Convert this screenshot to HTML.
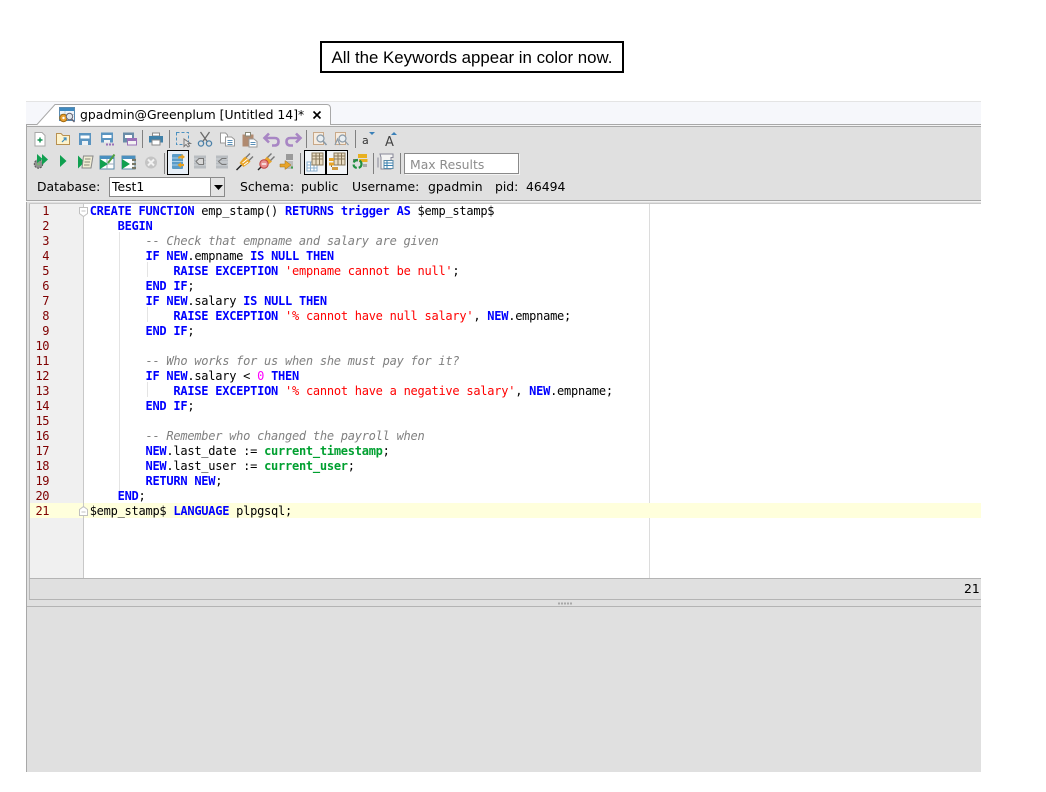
<!DOCTYPE html>
<html><head><meta charset="utf-8"><style>
html,body{margin:0;padding:0;background:#fff;width:1046px;height:792px;overflow:hidden}
.a{position:absolute}
#cap{left:320px;top:41px;width:300px;height:28px;border:2px solid #000;font:16.85px/30px "Liberation Sans",sans-serif;text-align:center;color:#000;background:#fff;white-space:nowrap}
.ui{font-family:"DejaVu Sans",sans-serif;font-size:12.4px;color:#000;white-space:pre;line-height:15px}
.n{position:absolute;left:29px;width:20px;text-align:right;font:12px/15px "DejaVu Sans Mono",monospace;color:#7f0000;letter-spacing:-.5px}
.c{position:absolute;left:89.7px;font:12px/15px "DejaVu Sans Mono",monospace;color:#000;white-space:pre;letter-spacing:-.25px}
b{color:#0000ff;font-weight:bold}
i{color:#808080}
s{text-decoration:none;color:#ff0000}
u{text-decoration:none;color:#00a030;font-weight:bold}
em{font-style:normal;color:#ff00ff}
</style></head><body>
<div id="cap" class="a">All the Keywords appear in color now.</div>

<div class="a" style="left:26px;top:101px;width:955px;height:671px;background:#e0e0e0"></div>
<div class="a" style="left:26px;top:101px;width:955px;height:23px;background:#f6f7fb;border-top:1px solid #e4e4e4;box-sizing:border-box"></div>
<div class="a" style="left:26px;top:124px;width:955px;height:1px;background:#a8a8a8"></div>
<div class="a" style="left:26px;top:126px;width:955px;height:1px;background:#a8a8a8"></div>
<div class="a" style="left:26px;top:125px;width:955px;height:1px;background:#f4f4f4"></div>
<div class="a" style="left:26px;top:124px;width:1px;height:648px;background:#a8a8a8"></div>
<div class="a" style="left:26px;top:200px;width:955px;height:1px;background:#a8a8a8"></div>
<div class="a" style="left:26px;top:201px;width:955px;height:1px;background:#f4f4f4"></div>

<!-- tab -->
<svg class="a" style="left:26px;top:101px" width="310" height="26">
<path d="M11 24L29 4H301Q305 4 305 8V24Z" fill="#fff"/>
<path d="M0 23.5H11L29 3.5H301Q304.5 3.5 304.5 8V24" fill="none" stroke="#a8a8a8"/>
</svg>
<div class="a ui" style="left:80px;top:107px">gpadmin@Greenplum [Untitled 14]*</div>
<svg class="a" style="left:312px;top:110px" width="10" height="10"><path d="M1.5 1.5L8.5 8.5M8.5 1.5L1.5 8.5" stroke="#000" stroke-width="1.6"/></svg>

<!-- toggled boxes -->
<div class="a" style="left:167px;top:150px;width:20px;height:23px;border:1px solid #000;background:#e8f0f8"></div>
<div class="a" style="left:304px;top:150px;width:20px;height:23px;border:1px solid #000;background:#f2f5f8"></div>
<div class="a" style="left:326px;top:150px;width:20px;height:23px;border:1px solid #000;background:#f2f5f8"></div>
<div class="a" style="left:325px;top:150px;width:1px;height:25px;background:#000"></div>

<svg class="a" style="left:0;top:0" width="1046" height="210">
<!-- tab icon -->
<g transform="translate(59,107)">
<rect x=".5" y=".5" width="15" height="13" fill="#eef4fa" stroke="#5a8ab0"/><rect x="1" y="1" width="14" height="3" fill="#3f8ac0"/>
<path d="M1 7.5H15M6 4V14" stroke="#c0d0dc"/>
<circle cx="4.5" cy="11" r="3.7" fill="#e8a030" stroke="#a06a10"/><circle cx="4.5" cy="11" r="1.2" fill="#fff"/>
<circle cx="10.5" cy="9.5" r="3.2" fill="#dfe6ea" stroke="#667"/><path d="M12.5 12L15.5 15" stroke="#667" stroke-width="1.5"/>
</g>
<!-- separators -->
<g stroke="#808080">
<path d="M142.5 130V148M169.5 130V148M306.5 130V148M355.5 130V148M164.5 153V174M300.5 153V174M373.5 153V174M400.5 153V174"/>
</g>
<!-- row 1 -->
<g transform="translate(40,139)"><path d="M-5 -6.5H2L5 -3.5V7H-5Z" fill="#fff" stroke="#a8a8a8"/><path d="M-2.5 1H2.5M0 -1.5V3.5" stroke="#109050" stroke-width="1.4"/></g>
<g transform="translate(63,139)"><path d="M-6.5 -5.5H-2L0 -3.5H6.5V5.5H-6.5Z" fill="#fdf3cc" stroke="#b89050"/><path d="M-1 3L3 -1M0.5 -1H3V1.5" stroke="#3a8ac0" fill="none" stroke-width="1.2"/></g>
<g transform="translate(85,139)"><rect x="-6" y="-6" width="12" height="12" fill="#5a94c0"/><rect x="-4.5" y="-3.5" width="9" height="3" fill="#fff"/><rect x="-3" y="2" width="6" height="4" fill="#eef2f5"/></g>
<g transform="translate(107,139)"><rect x="-6" y="-6.5" width="12" height="10" fill="#5a94c0"/><rect x="-4.5" y="-4" width="9" height="3" fill="#fff"/><rect x="-3" y="1" width="6" height="2.5" fill="#eef2f5"/><path d="M-1 5.5H7" stroke="#9a70b8" stroke-width="2" stroke-dasharray="2 1"/></g>
<g transform="translate(129,139)"><rect x="-6" y="-6.5" width="11" height="10" fill="#6a8ca8"/><rect x="-4" y="-4" width="7" height="3" fill="#fff"/><rect x="-1.5" y="-.5" width="9" height="6.5" fill="#f2f2f2" stroke="#9a70b8"/><rect x="-1.5" y="-.5" width="9" height="2.5" fill="#9a70b8"/></g>
<g transform="translate(156,139)"><rect x="-3.5" y="-6" width="7" height="3" fill="#fff" stroke="#888"/><rect x="-7" y="-3" width="14" height="6.5" fill="#3f80a8"/><rect x="-4" y="1" width="8" height="5" fill="#fff" stroke="#888"/></g>
<g transform="translate(183,139)"><rect x="-6.5" y="-6.5" width="12" height="12" fill="none" stroke="#4a90c0" stroke-dasharray="3 2"/><path d="M1 0V7.5L3 5.5L5 8L6.5 7L5 4.5H7.5Z" fill="#e4e4e4" stroke="#777"/></g>
<g transform="translate(205,139)" fill="none"><path d="M-4.5 -7L2.5 3M4.5 -7L-2.5 3" stroke="#6a6a6a" stroke-width="1.3"/><circle cx="-4" cy="4.5" r="2.6" stroke="#4a80a8" stroke-width="1.3"/><circle cx="4" cy="4.5" r="2.6" stroke="#4a80a8" stroke-width="1.3"/></g>
<g transform="translate(227.5,139.5)"><path d="M-7 -6.5H-2L0 -4.5V3.5H-7Z" fill="#fff" stroke="#999"/><path d="M-2 -2.5H4L7 0V6.5H-2Z" fill="#fff" stroke="#999"/><path d="M0 1H5M0 3H5M0 5H5" stroke="#5a90b8"/></g>
<g transform="translate(249.5,139.5)"><rect x="-7" y="-5" width="11" height="12" fill="#b08a70"/><rect x="-4" y="-7" width="5" height="3.5" fill="#fff" stroke="#887"/><path d="M-.5 -.5H4.5L7.5 2V7.5H-.5Z" fill="#fff" stroke="#999"/><path d="M1 3H6M1 5H6" stroke="#5a90b8"/></g>
<g transform="translate(272,140)"><path d="M-3 -6.5L-7.5 -2L-3 2.5M-6.5 -2H2.5Q6.5 -2 6.5 1.5Q6.5 5.5 2.5 5.5H0" fill="none" stroke="#a886c4" stroke-width="2.6"/></g>
<g transform="translate(293,140)"><path d="M3 -6.5L7.5 -2L3 2.5M6.5 -2H-2.5Q-6.5 -2 -6.5 1.5Q-6.5 5.5 -2.5 5.5H0" fill="none" stroke="#a886c4" stroke-width="2.6"/></g>
<g transform="translate(320,139)" fill="none"><rect x="-6.5" y="-6.5" width="10" height="12" fill="#f6ece0" stroke="#c8a888"/><circle cx="0.5" cy="-.5" r="3.5" fill="#e8eef2" stroke="#8a9aa8" stroke-width="1.2"/><path d="M3 2L6.5 6" stroke="#8a9aa8" stroke-width="1.7"/></g>
<g transform="translate(342,139)" fill="none"><rect x="-6.5" y="-6.5" width="10" height="12" fill="#f6ece0" stroke="#c8a888"/><circle cx="0.5" cy="-.5" r="3.5" fill="#e8eef2" stroke="#8a9aa8" stroke-width="1.2"/><path d="M3 2L6.5 6M-7 6L-4.5 0L-2 6" stroke="#8a9aa8" stroke-width="1.2"/></g>
<text x="362" y="144" font-family="DejaVu Sans" font-size="11" fill="#333">a</text>
<path d="M369 132H375L372 135Z" fill="#3a80b8"/>
<text x="385" y="146" font-family="DejaVu Sans" font-size="13" fill="#444">A</text>
<path d="M391 135H397L394 132Z" fill="#3a80b8"/>
<!-- row 2 -->
<g transform="translate(41,162)"><circle cx="-2.5" cy="2" r="4.2" fill="#909090" stroke="#555" stroke-dasharray="2 1"/><circle cx="-2.5" cy="2" r="1.3" fill="#7ab870"/><path d="M-4 -8L1.5 -3L-4 1ZM1 -8L7 -2.5L1 3Z" fill="#10a050"/></g>
<g transform="translate(63,161)"><path d="M-3 -6L3.5 0L-3 6Z" fill="#10a050"/></g>
<g transform="translate(85,162)"><path d="M-7 -6.5L-.5 0L-7 6.5Z" fill="#10a050"/><path d="M-1.5 -6H8L6 6H-3Z" fill="#f0ecd4" stroke="#888"/><path d="M0 -3H5.5M-.5 0H5M-1 3H4.5" stroke="#887"/></g>
<g transform="translate(107,162)"><rect x="-7" y="-6" width="14" height="13" fill="#fff" stroke="#5a8aa8"/><rect x="-7" y="-6" width="14" height="3" fill="#4a90c0"/><path d="M0 -3V7M-7 2H7" stroke="#9ab"/><path d="M-7 -3L1 2L-7 7Z" fill="#10a050"/><path d="M1 1L7.5 -7.5" stroke="#50a040" stroke-width="2"/></g>
<g transform="translate(129,162)"><rect x="-7" y="-6" width="13" height="13" fill="#fff" stroke="#5a8aa8"/><rect x="-7" y="-6" width="13" height="3" fill="#4a90c0"/><path d="M-7 -3L1 2L-7 7Z" fill="#10a050"/><path d="M3 -2H7M3 2H7M3 6H7" stroke="#776" stroke-width="2.2"/></g>
<g transform="translate(151,162.5)"><circle r="6" fill="#c4c4c4"/><path d="M-3 -3L3 3M3 -3L-3 3" stroke="#f2f2f2" stroke-width="2"/></g>
<g transform="translate(178.5,161.5)"><rect x="-6.5" y="-7.5" width="11" height="15" rx="1" fill="#5a9cc8"/><path d="M-6.5 -3.5H4.5M-6.5 0H4.5M-6.5 3.5H4.5" stroke="#aad0e8"/><path d="M-.5 -3.5Q0 -6 3 -5.5V-7.5L6.5 -4.5L3 -2V-3.7Q1 -4 .8 -2.5ZM-1 3.5L2.5 .8V2.4H5.5V4.6H2.5V6.2Z" fill="#e8a020"/></g>
<g transform="translate(200,162)"><rect x="-6" y="-6.5" width="12" height="13" fill="#b8bcc0"/><path d="M-6 -3H6M-6 0H6M-6 3H6" stroke="#d0d4d8"/><path d="M3.5 -3.5H-1L-4 -.5L-1 2.5H3.5Z" fill="#d8d8d8" stroke="#777"/></g>
<g transform="translate(222,162)"><rect x="-6" y="-6.5" width="12" height="13" fill="#b8bcc0"/><path d="M-6 -3H6M-6 0H6M-6 3H6" stroke="#d0d4d8"/><path d="M4.5 -3.5H0L-3.5 -.5L0 2.5H4.5" fill="none" stroke="#777"/></g>
<g transform="translate(244.5,162)"><path d="M-8 8L-3 3" stroke="#222" stroke-width="1.4"/><path d="M-5 1L-1 -4L1 -5.5L6 -.5L4 1.5L-1 5Z" fill="#e8a428"/><path d="M-2 1L3 -3M-.5 3L3.5 0" stroke="#fff"/><path d="M1.5 -4.5L5.5 -8.5M4.5 -1.5L8.5 -5.5" stroke="#777" stroke-width="1.4"/></g>
<g transform="translate(266,162)"><path d="M-8 8L-4 4" stroke="#222" stroke-width="1.4"/><path d="M-2 -2L1 -5.5L6 -.5L3 2Z" fill="#e8a428"/><path d="M1.5 -4.5L5.5 -8.5M4.5 -1.5L8.5 -5.5" stroke="#777" stroke-width="1.4"/><circle cx="-2" cy="2" r="4.2" fill="#e89090" stroke="#c04040"/><path d="M-4.2 2H.2" stroke="#fff" stroke-width="1.3"/></g>
<g transform="translate(287,163)"><path d="M-1 -8H6M-1 -6H6M-1 -4H6" stroke="#555"/><path d="M-1 -2H6V6H-1Z" fill="#bcbcbc"/><path d="M-7 1H-2V-2.5L4 2L-2 6.5V4H-7Z" fill="#e8a428" stroke="#a07018" stroke-width=".5"/><rect x="4" y="3.5" width="2" height="2" fill="#40a050"/></g>
<g transform="translate(315,161)"><rect x="-8" y="1" width="10" height="9" fill="#fff" stroke="#8ab0d0"/><path d="M-8 4H2M-8 7H2M-4.5 1V10M-1 1V10" stroke="#8ab0d0"/><rect x="-3" y="-8" width="11" height="12" fill="#e8dcc4" stroke="#8a7a5c"/><path d="M-3 -5H8M-3 -2H8M1 -8V4M4.5 -8V4" stroke="#8a7a5c"/></g>
<g transform="translate(337,161)"><rect x="-3" y="-8" width="11" height="12" fill="#e8dcc4" stroke="#8a7a5c"/><path d="M-3 -5H8M-3 -2H8M1 -8V4M4.5 -8V4" stroke="#8a7a5c"/><rect x="-8" y="-3" width="5" height="3" fill="#e8a428"/><rect x="-8" y="1.5" width="5" height="3" fill="#e8a428"/><rect x="-5" y="6" width="6" height="3" fill="#d09a40"/><path d="M-5.5 4.5V6" stroke="#806a48"/></g>
<g transform="translate(360,161)"><rect x="-2" y="-7" width="9" height="4" fill="#e8b020"/><rect x="-1" y="-2" width="8.5" height="3" fill="#e8b020"/><rect x="-7" y="-2" width="5" height="2.5" fill="#7a7a7a"/><circle cx="-2.5" cy="3" r="4" fill="none" stroke="#209040" stroke-width="2.2" stroke-dasharray="5 2"/><rect x="3" y="3" width="4" height="3" fill="#aaa"/></g>
<g transform="translate(386,161.5)"><path d="M-6 -7.5H7V-4H5V7.5H-5V-4Z" fill="#f4f4f4" stroke="#889"/><path d="M-8 -4V6" stroke="#889"/><rect x="-2" y="-1" width="9" height="8" fill="#fff" stroke="#5a8aa8"/><path d="M-2 1.5H7M-2 4H7M1 -1V7" stroke="#3a80b0"/></g>
</svg>

<!-- max results -->
<div class="a ui" style="left:404px;top:153px;width:108px;height:19px;background:#fff;border:1px solid #8a8a8a;box-shadow:1px 1px 0 #f4f4f4;color:#8c8c8c;line-height:21px;padding-left:5px">Max Results</div>

<!-- db line -->
<div class="a ui" style="left:37px;top:179px">Database:</div>
<div class="a" style="left:109px;top:177px;width:114px;height:18px;background:#fff;border:1px solid #8a8a8a"></div>
<div class="a ui" style="left:112px;top:179px">Test1</div>
<div class="a" style="left:210px;top:178px;width:1px;height:18px;background:#8a8a8a"></div>
<div class="a" style="left:211px;top:178px;width:13px;height:18px;background:#e4e4e4"></div>
<svg class="a" style="left:213px;top:184px" width="12" height="7"><path d="M1 1H10L5.5 6Z" fill="#000"/></svg>
<div class="a ui" style="left:240px;top:179px">Schema:</div>
<div class="a ui" style="left:301px;top:179px">public</div>
<div class="a ui" style="left:352px;top:179px">Username:</div>
<div class="a ui" style="left:428px;top:179px">gpadmin</div>
<div class="a ui" style="left:495px;top:179px">pid:</div>
<div class="a ui" style="left:526px;top:179px">46494</div>

<!-- editor -->
<div class="a" style="left:29px;top:203px;width:952px;height:375px;background:#fff"></div>
<div class="a" style="left:29px;top:203px;width:1px;height:397px;background:#b8b8b8"></div>
<div class="a" style="left:29px;top:203px;width:952px;height:1px;background:#c8c8c8"></div>
<div class="a" style="left:30px;top:204px;width:53px;height:374px;background:#f0f0f0"></div>
<div class="a" style="left:83px;top:204px;width:1px;height:374px;background:#c8c8c8"></div>
<div class="a" style="left:649px;top:204px;width:1px;height:374px;background:#dcdcdc"></div>
<div class="a" style="left:30px;top:503px;width:951px;height:15px;background:#ffffdc"></div>
<div class="a" style="left:83px;top:503px;width:1px;height:15px;background:#c8c8c8"></div>
<div class="a" style="left:29px;top:578px;width:952px;height:1px;background:#b4b4b4"></div>
<div class="a" style="left:29px;top:599px;width:952px;height:1px;background:#b4b4b4"></div>
<div class="a" style="left:27px;top:606px;width:954px;height:1px;background:#b4b4b4"></div>
<svg class="a" style="left:558px;top:602px" width="16" height="3"><path d="M0 1.5H14" stroke="#a8a8a8" stroke-width="2" stroke-dasharray="2 1"/></svg>
<div class="a ui" style="left:964px;top:581px">21</div>

<!-- fold marks -->
<svg class="a" style="left:76px;top:203px" width="20" height="320">
<path d="M3.5 4.5H11.5V10.5L7.5 13.5L3.5 10.5Z" fill="#fff" stroke="#c0c0c0"/><path d="M5.5 8H9.5" stroke="#c0c0c0"/>
<path d="M3.5 312.5V306.5L7.5 303.5L11.5 306.5V312.5Z" fill="#fff" stroke="#c0c0c0"/><path d="M5.5 309H9.5" stroke="#c0c0c0"/>
</svg>
<div class="a" style="left:119px;top:232px;width:1px;height:262px;background:#e4e4e4"></div>
<div class="a" style="left:147px;top:262px;width:1px;height:15px;background:#e4e4e4"></div>
<div class="a" style="left:147px;top:307px;width:1px;height:15px;background:#e4e4e4"></div>
<div class="a" style="left:147px;top:382px;width:1px;height:15px;background:#e4e4e4"></div>

<!-- line numbers -->
<div class="n" style="top:204px">1</div>
<div class="n" style="top:219px">2</div>
<div class="n" style="top:234px">3</div>
<div class="n" style="top:249px">4</div>
<div class="n" style="top:264px">5</div>
<div class="n" style="top:279px">6</div>
<div class="n" style="top:294px">7</div>
<div class="n" style="top:309px">8</div>
<div class="n" style="top:324px">9</div>
<div class="n" style="top:339px">10</div>
<div class="n" style="top:354px">11</div>
<div class="n" style="top:369px">12</div>
<div class="n" style="top:384px">13</div>
<div class="n" style="top:399px">14</div>
<div class="n" style="top:414px">15</div>
<div class="n" style="top:429px">16</div>
<div class="n" style="top:444px">17</div>
<div class="n" style="top:459px">18</div>
<div class="n" style="top:474px">19</div>
<div class="n" style="top:489px">20</div>
<div class="n" style="top:504px">21</div>

<!-- code -->
<div class="c" style="top:204px"><b>CREATE</b> <b>FUNCTION</b> emp_stamp() <b>RETURNS</b> <b>trigger</b> <b>AS</b> $emp_stamp$</div>
<div class="c" style="top:219px">    <b>BEGIN</b></div>
<div class="c" style="top:234px">        <i>-- Check that empname and salary are given</i></div>
<div class="c" style="top:249px">        <b>IF</b> <b>NEW</b>.empname <b>IS</b> <b>NULL</b> <b>THEN</b></div>
<div class="c" style="top:264px">            <b>RAISE</b> <b>EXCEPTION</b> <s>'empname cannot be null'</s>;</div>
<div class="c" style="top:279px">        <b>END</b> <b>IF</b>;</div>
<div class="c" style="top:294px">        <b>IF</b> <b>NEW</b>.salary <b>IS</b> <b>NULL</b> <b>THEN</b></div>
<div class="c" style="top:309px">            <b>RAISE</b> <b>EXCEPTION</b> <s>'% cannot have null salary'</s>, <b>NEW</b>.empname;</div>
<div class="c" style="top:324px">        <b>END</b> <b>IF</b>;</div>
<div class="c" style="top:354px">        <i>-- Who works for us when she must pay for it?</i></div>
<div class="c" style="top:369px">        <b>IF</b> <b>NEW</b>.salary &lt; <em>0</em> <b>THEN</b></div>
<div class="c" style="top:384px">            <b>RAISE</b> <b>EXCEPTION</b> <s>'% cannot have a negative salary'</s>, <b>NEW</b>.empname;</div>
<div class="c" style="top:399px">        <b>END</b> <b>IF</b>;</div>
<div class="c" style="top:429px">        <i>-- Remember who changed the payroll when</i></div>
<div class="c" style="top:444px">        <b>NEW</b>.last_date := <u>current_timestamp</u>;</div>
<div class="c" style="top:459px">        <b>NEW</b>.last_user := <u>current_user</u>;</div>
<div class="c" style="top:474px">        <b>RETURN</b> <b>NEW</b>;</div>
<div class="c" style="top:489px">    <b>END</b>;</div>
<div class="c" style="top:504px">$emp_stamp$ <b>LANGUAGE</b> plpgsql;</div>
</body></html>
